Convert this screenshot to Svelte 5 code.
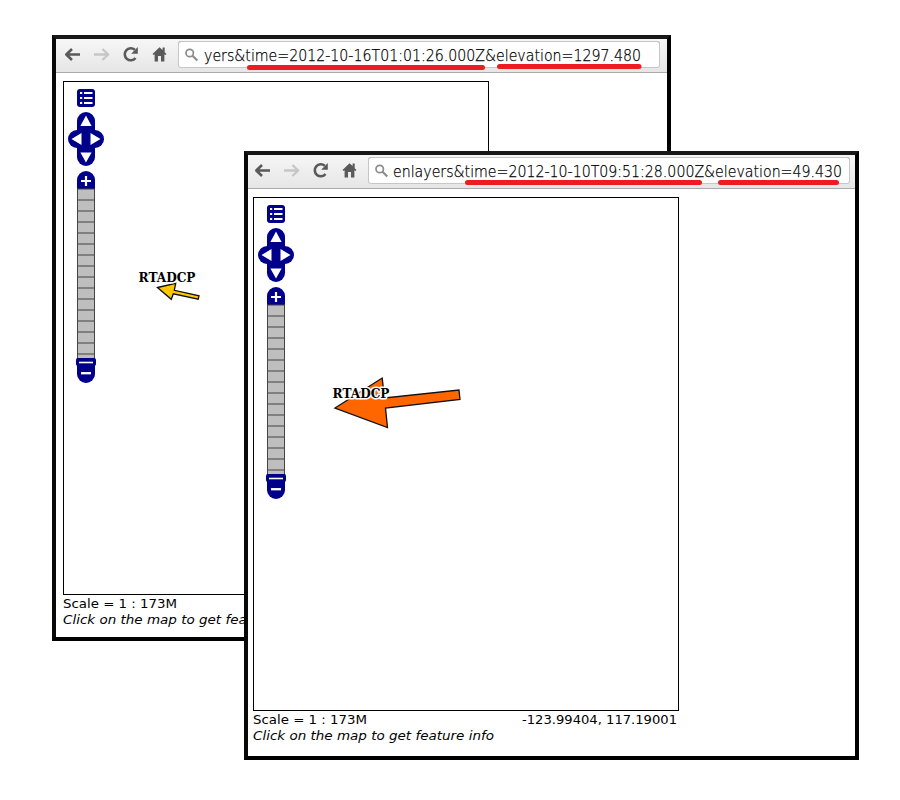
<script>
  const windows = [
    {
      id: 'back',
      url: { text: 'yers&time=2012-10-16T01:01:26.000Z&elevation=1297.480', x: 26, w: 437 },
      marks: [
        { x1: 71.5, x2: 304.5, y: 26.5 },
        { x1: 321.5, x2: 461, y: 25.5 }
      ],
      arrow: '94.5,206.5 112.7,202.3 111.3,209.3 136,214.8 135.2,218.2 110.3,212.8 108.3,218.3',
      fill: '#ffc800',
      label: { x: 75.5, y: 201 },
      coords: ''
    },
    {
      id: 'front',
      url: { text: 'enlayers&time=2012-10-10T09:51:28.000Z&elevation=49.430', x: 25, w: 449 },
      marks: [
        { x1: 99.5, x2: 331.5, y: 25.5 },
        { x1: 352.5, x2: 468.5, y: 25.5 }
      ],
      arrow: '82,211 129.2,181 131.5,201 206,193 207,202.5 132.5,211 134.5,230.5',
      fill: '#ff6600',
      label: { x: 79.5, y: 201 },
      coords: '-123.99404, 117.19001'
    }
  ];
  const ticks = Array.from({ length: 15 }, (_, i) => 119 + i * 11);
</script>

<main>
  {#each windows as win (win.id)}
    <section class="window {win.id}">
      <header class="toolbar">
        <svg class="icon" viewBox="0 0 18 20">
          <path d="M16 10.5H3M8 5L2.3 10.5L8 16" fill="none" stroke="#5a5a5a" stroke-width="2.6" stroke-linejoin="round" />
        </svg>
        <svg class="icon" viewBox="0 0 18 20">
          <path d="M1 10.5H14.5M9.4 5L15.2 10.5L9.4 16" fill="none" stroke="#c6c6c6" stroke-width="2.3" stroke-linejoin="round" />
        </svg>
        <svg class="icon" viewBox="0 0 18 20">
          <path d="M13.5 14A6 6 0 1 1 12.8 5.8" fill="none" stroke="#5a5a5a" stroke-width="2.6" />
          <path d="M15.8 3V9.7H9.2Z" fill="#5a5a5a" />
        </svg>
        <svg class="icon" viewBox="0 0 18 20">
          <path d="M8.5 3.2L1.5 10L2.7 11.1L3.6 10.3V17.5H7V12H10V17.5H13.4V10.3L14.3 11.1L15.5 10L13.7 8.2V3.5H11.6V6.1Z" fill="#5a5a5a" />
        </svg>
        <div class="address">
          <svg width="482" height="28" viewBox="0 0 482 28">
            <circle cx="11.7" cy="12" r="3.7" fill="none" stroke="#8c8c8c" stroke-width="1.7" />
            <path d="M14.5 14.7L19.3 19.5" stroke="#8c8c8c" stroke-width="2.2" />
            {#each win.marks as m}
              <path d="M{m.x1} {m.y}H{m.x2}" stroke="#ed1c24" stroke-width="5" stroke-linecap="round" />
            {/each}
            <text class="url" x={win.url.x} y="20" textLength={win.url.w} lengthAdjust="spacingAndGlyphs">{win.url.text}</text>
          </svg>
        </div>
      </header>
      <div class="page">
        <div class="map">
          <svg width="424" height="512" viewBox="1 1 424 512">
            <rect x="14" y="8" width="18" height="18" rx="3" fill="#00008b" />
            <path d="M17 12H19.2M21 12H29.5M17 17H19.2M21 17H29.5M17 22H19.2M21 22H29.5" stroke="#fff" stroke-width="2" />
            <rect x="14" y="31" width="18" height="54" rx="9" fill="#00008b" />
            <rect x="5" y="49" width="36" height="18" rx="9" fill="#00008b" />
            <path d="M23 34.5L28.6 45H17.4ZM23 81.5L28.6 71.5H17.4ZM8.5 58L18.5 52V64ZM37.5 58L27.5 52V64Z" fill="#fff" />
            <path d="M14 108V99A9 9 0 0 1 32 99V108Z" fill="#00008b" />
            <path d="M18 100H28M23 95V105" stroke="#fff" stroke-width="2.2" />
            <rect x="14.5" y="108" width="17" height="172" fill="#bebebe" stroke="#444" />
            {#each ticks as y}
              <path d="M15 {y}H31" stroke="#808080" stroke-width="2" />
            {/each}
            <path d="M14 283H32V293A9 9 0 0 1 14 293Z" fill="#00008b" />
            <rect x="13" y="277" width="20" height="8" rx="2" fill="#00008b" />
            <path d="M16 281.5H30" stroke="#fff" stroke-width="1.6" />
            <path d="M18 292.2H28" stroke="#fff" stroke-width="2.3" />
            <polygon points={win.arrow} fill={win.fill} stroke="#111" stroke-width="1.3" />
            <text class="label" x={win.label.x} y={win.label.y} textLength="57" lengthAdjust="spacingAndGlyphs">RTADCP</text>
          </svg>
        </div>
        <svg class="status" width="426" height="34" viewBox="0 0 426 34">
          <text x="0" y="13" textLength="114" lengthAdjust="spacingAndGlyphs">Scale = 1 : 173M</text>
          {#if win.coords}
            <text x="269" y="13" textLength="155" lengthAdjust="spacingAndGlyphs">{win.coords}</text>
          {/if}
          <text class="hint" x="0" y="29" textLength="241" lengthAdjust="spacingAndGlyphs">Click on the map to get feature info</text>
        </svg>
      </div>
    </section>
  {/each}
</main>

<style>
  :global(body) { background: #fff; }
  main {
    position: relative;
    width: 900px;
    height: 800px;
    overflow: hidden;
    background: #fff;
  }
  .window {
    position: absolute;
    box-sizing: border-box;
    border: 4px solid #000;
    border-top-color: #181818;
    border-left-color: #080808;
    background: #fff;
    overflow: hidden;
  }
  .back { left: 52px; top: 35px; width: 619px; height: 606px; --inset: 7px; }
  .front { left: 244px; top: 151px; width: 615px; height: 609px; --inset: 5px; }
  .toolbar {
    box-sizing: border-box;
    display: flex;
    align-items: flex-start;
    gap: 11px;
    height: 34px;
    padding: 2px 0 0 calc(var(--inset) + 1px);
    border-bottom: 1px solid #aaa;
    background: linear-gradient(#f6f6f6, #e6e6e6);
  }
  .icon { flex: none; width: 18px; height: 20px; margin-top: 3px; }
  .address {
    flex: none;
    width: 482px;
    height: 27px;
    margin-left: -2px;
    border-radius: 3px;
    background: #fff;
    box-shadow: inset 0 0 0 1px #c6c6c6, inset 0 1px 0 #b0b0b0;
  }
  svg { display: block; overflow: visible; }
  .url {
    font: 200 16px "DejaVu Sans", sans-serif;
    fill: #000;
    stroke: #000;
    stroke-width: 0.25px;
  }
  .page { padding: 8px 0 0 var(--inset); }
  .map {
    box-sizing: border-box;
    width: 426px;
    height: 514px;
    border: 1px solid #000;
  }
  .label {
    font: bold 12px "DejaVu Serif", serif;
    fill: #000;
    stroke: #fff;
    stroke-width: 3px;
    stroke-linejoin: round;
    paint-order: stroke;
  }
  .status { font: 12.5px "DejaVu Sans", sans-serif; fill: #000; }
  .hint { font-style: italic; }
</style>
